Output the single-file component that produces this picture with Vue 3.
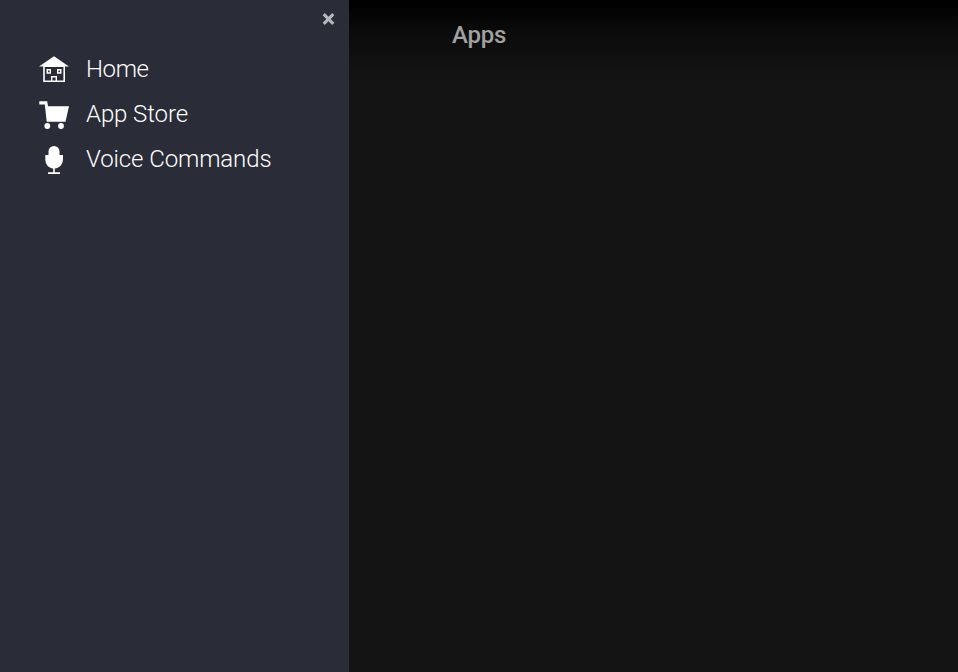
<script setup>
const items = [
  { id: 'home', label: 'Home' },
  { id: 'store', label: 'App Store' },
  { id: 'voice', label: 'Voice Commands' },
]
</script>

<template>
  <div class="screen">
    <aside class="sidebar">
      <div class="top">
        <button class="close" aria-label="Close">
          <svg width="13" height="13" viewBox="0 0 13 13"><path d="M1.7 2.2L11.3 11.8M11.3 2.2L1.7 11.8" /></svg>
        </button>
      </div>
      <nav>
        <a v-for="item in items" :key="item.id" class="item">
          <svg v-if="item.id === 'home'" class="icon" viewBox="0 0 40 40">
            <path fill-rule="evenodd" d="M20 6.3L35 16.5H31V32H9.2V16.5H5ZM10.8 17V30.6H17V26H23V30.6H29.4V17ZM18.4 27.4V30.6H21.6V27.4Z" />
            <path fill-rule="evenodd" d="M12.5 19H17V23.7H12.5ZM14 20.5V22.2H15.6V20.5ZM23 19H27.5V23.7H23ZM24.4 20.5V22.2H26V20.5Z" />
          </svg>
          <svg v-else-if="item.id === 'store'" class="icon" viewBox="0 0 40 40">
            <path d="M5.3 6.2H13.2L14 11.2H35L31.5 26.7H12.7L10.8 9.6H5.3Z" />
            <circle cx="13.3" cy="31" r="2.9" /><circle cx="27" cy="31" r="2.9" />
          </svg>
          <svg v-else class="icon" viewBox="0 0 40 40">
            <path d="M11.3 15H14.5V11.5A5.5 5.5 0 0 1 25.5 11.5V15H29V19C29 24.5 25.5 28.1 20.8 28.5V32.3H26V34H14V32.3H19.2V28.5C14.5 28.1 11.3 24.5 11.3 19Z" />
          </svg>
          <span class="label" :class="item.id">{{ item.label }}</span>
        </a>
      </nav>
    </aside>
    <main class="content"><h1>Apps</h1></main>
  </div>
</template>

<style>
body { background: #141414; }
</style>

<style scoped>
.screen {
  display: flex;
  height: 100vh;
  overflow: hidden;
  font-family: Roboto, "Liberation Sans", sans-serif;
}
.sidebar { width: 349px; flex: none; background: #2a2c37; }
.top { display: flex; justify-content: flex-end; height: 46px; padding: 12px 14px 0 0; box-sizing: border-box; }
.close { width: 13px; height: 13px; padding: 0; border: 0; background: none; display: block; }
.close svg { display: block; fill: none; stroke: #b5b7bf; stroke-width: 3.1; }
.item { display: flex; align-items: center; height: 45px; padding-left: 34px; }
.icon { width: 40px; height: 40px; flex: none; margin-top: 3px; fill: #fff; }
.label { margin-left: 12px; padding-top: 2px; color: #fff; font-size: 24px; font-weight: 300; line-height: 45px; letter-spacing: -0.1px; white-space: nowrap; }
.label.home { letter-spacing: -0.4px; }
.content {
  flex: 1;
  background: linear-gradient(#000 0, #0b0b0b 32px, #141414 80px);
}
h1 { margin: 20px 0 0 103px; color: #a1a1a1; font-size: 24px; font-weight: 500; line-height: 30px; letter-spacing: -0.2px; }
</style>
